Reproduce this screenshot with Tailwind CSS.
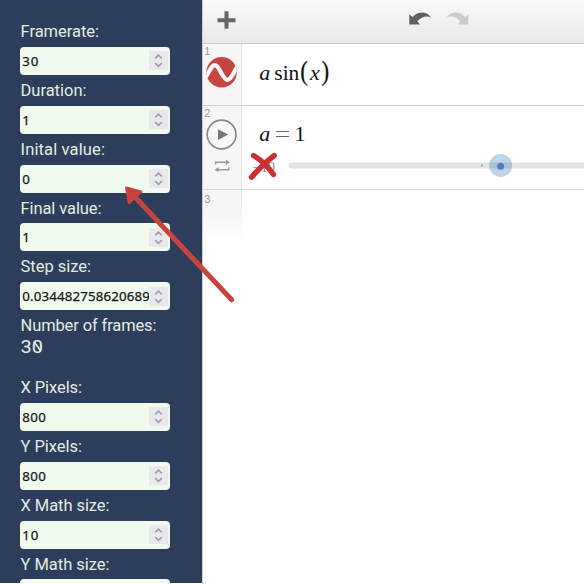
<!DOCTYPE html>
<html lang="en">
<head>
<meta charset="utf-8">
<title>Animation settings</title>
<script src="https://cdn.jsdelivr.net/npm/@tailwindcss/browser@4"></script>
</head>
<body class="relative w-[584px] h-[584px] overflow-hidden bg-white flex font-['Liberation_Sans',sans-serif]">
<svg class="hidden">
  <symbol id="spin" viewBox="0 0 19 19"><rect width="19" height="19" fill="#e9e8ed"/><path d="M6.2 7.3 9.5 4.2l3.3 3.1M6.2 12.2l3.3 3.1 3.3-3.1" fill="none" stroke="#9e9daa" stroke-width="1.6"/></symbol>
</svg>
<aside class="w-[202px] h-[583px] shrink-0 overflow-hidden bg-[#2c3e5c] pl-5 pt-[16.2px]">
  <div id="animation"></div>
  <div class="h-[62px]">
    <svg class="block w-[170px] h-[31px] overflow-visible"><text x="0.5" y="21.2" textLength="136" font-family="Roboto" font-size="16.5" fill="#e3ede1">Number of frames:</text></svg>
    <svg class="block w-[60px] h-[31px] overflow-visible"><text x="0.5" y="11.6" textLength="22.5" lengthAdjust="spacingAndGlyphs" font-family="Roboto" font-size="17.5" fill="#e3ede1">30</text><path d="M14 0.5l6.800 9.500" stroke="#e3ede1" stroke-width="1.700"/></svg>
  </div>
  <div id="resolution"></div>
</aside>
<main class="flex-1 min-w-0 flex flex-col border-l border-[#c9ced6]">
  <header class="h-[44px] shrink-0 border-b border-[#c9c9c9] bg-linear-to-b from-[#fafafa] to-[#e8e8e8] flex items-start">
    <svg class="w-[381px] h-[43px]" viewBox="203 0 381 43">
      <path d="M226.500 11.300v17.500M217.500 20.200h18" stroke="#666" stroke-width="4"/>
      <path d="M409.300 14.200l3.300 2.700C418 11.200 427 10.800 430.900 17.500C426.400 15.100 421.400 16.900 417.300 21.300l2.700 3.300h-10.700z" fill="#5f5f5f"/>
      <path d="M468.300 14.200l-3.300 2.700C459.600 11.200 450.600 10.800 446.700 17.500C451.200 15.100 456.200 16.900 460.300 21.300l-2.700 3.300h10.700z" fill="#cbcbcb"/>
    </svg>
  </header>
  <section class="h-[62px] flex border-b border-[#d2d2d2]">
    <div class="w-[39px] bg-[#f6f6f6] border-r border-[#e4e4e4]">
      <svg class="w-[38px] h-[61px]" viewBox="203 44 38 61">
        <text x="204.200" y="55" font-size="11" fill="#999">1</text>
        <clipPath id="disc"><circle cx="221.600" cy="72.300" r="15.200"/></clipPath>
        <circle cx="221.600" cy="72.300" r="15.200" fill="#c74440"/>
        <path d="M205.500 77.500C211 68 212.500 64.500 215.500 65.300C219.500 66.300 223 80.200 227.500 80C230.500 79.800 234 73 238 65" fill="none" stroke="#fff" stroke-width="4.200" clip-path="url(#disc)"/>
      </svg>
    </div>
    <svg class="w-[342px] h-[61px]" viewBox="242 44 342 61" font-family="Liberation Serif" font-size="22" fill="#111">
      <text x="259.200" y="80" font-style="italic">a</text><text x="274.300" y="80" textLength="25" lengthAdjust="spacingAndGlyphs">sin</text>
      <text transform="translate(300.300 79.600) scale(1.050 1.200)" stroke="#111" stroke-width=".2">(</text><text x="310" y="80" font-style="italic">x</text><text transform="translate(321.500 79.600) scale(1.050 1.200)" stroke="#111" stroke-width=".2">)</text>
    </svg>
  </section>
  <section class="h-[84px] flex border-b border-[#d6d6d6]">
    <div class="w-[39px] bg-[#f6f6f6] border-r border-[#e4e4e4]">
      <svg class="w-[38px] h-[83px]" viewBox="203 106 38 83">
        <text x="204.200" y="117.300" font-size="11" fill="#999">2</text>
        <circle cx="221.600" cy="134.500" r="14.400" fill="#f8f8f8" stroke="#888" stroke-width="1.600"/>
        <path d="M218 129.200l10.200 5.300-10.200 5.500z" fill="#777"/>
        <path d="M215.500 164.500v-2.300h13M228.800 167.500v2.300h-13" fill="none" stroke="#999" stroke-width="1.400"/>
        <path d="M226 159.700l4 2.500-4 2.500zM218.500 167.300l-4 2.500 4 2.500z" fill="#999"/>
      </svg>
    </div>
    <svg class="w-[342px] h-[83px]" viewBox="242 106 342 83">
      <g font-family="Liberation Serif" font-size="22" fill="#111"><text x="259.200" y="140.600" font-style="italic">a</text><path d="M276 131.500h13M276 136.500h13" stroke="#666" stroke-width="1.200"/><text x="294.500" y="140.600">1</text></g>
      <text x="252.500" y="172" textLength="22.500" font-family="Liberation Serif" font-size="14" fill="#888">−10</text>
      <path d="M291.500 165.500H590" stroke="#e4e4e4" stroke-width="6" stroke-linecap="round"/>
      <circle cx="482" cy="165.400" r="1" fill="#999"/>
      <circle cx="500.600" cy="165.400" r="11.500" fill="#2d70b3" fill-opacity=".3"/>
      <circle cx="500.600" cy="166.200" r="3.500" fill="#4a7fc1"/>
      <path d="M253.500 155.500Q265 162 273.500 174.500M274.200 155.500Q263 164 251.500 177.300" fill="none" stroke="#c9302f" stroke-width="5.400" stroke-linecap="round"/>
    </svg>
  </section>
  <section class="h-[54px] w-[39px] bg-linear-to-b from-[#f6f6f6] from-40% to-white">
    <svg class="w-[39px] h-[54px]" viewBox="203 190 39 54"><text x="204.200" y="202.500" font-size="11" fill="#999">3</text><linearGradient id="edge" x2="0" y2="1"><stop stop-color="#e4e4e4"/><stop offset="1" stop-color="#fff"/></linearGradient><rect x="241" y="190" width="1" height="54" fill="url(#edge)"/></svg>
  </section>
</main>
<svg class="absolute inset-0 w-[584px] h-[584px] pointer-events-none" viewBox="0 0 584 584"><path d="M134.500 196.500L231.700 299.800" stroke="#c8443f" stroke-width="5" stroke-linecap="round"/><path d="M126.300 187.800l14.800 4-12.200 11.200z" fill="#c8443f" stroke="#c8443f" stroke-width="2.500" stroke-linejoin="round"/></svg>
<script>
const field = ([label, width, value, valueWidth]) => `
<div class="h-[58.8px]">
  <svg class="block w-[170px] h-[30.8px] overflow-visible"><text x="0.5" y="21.2" textLength="${width}" font-family="Roboto" font-size="16.5" fill="#e3ede1">${label}</text></svg>
  <div class="w-[150px] h-[28px] rounded-[4px] bg-[#f0faee] flex items-center justify-between pr-[2px]">
    <svg class="w-[129px] h-[28px]"><text x="2.3" y="19.1" textLength="${valueWidth}" font-family="Noto Sans" font-size="13.3" fill="#151515" stroke="#151515" stroke-width=".25">${value}</text></svg>
    <svg class="w-[19px] h-[19px]"><use href="#spin"/></svg>
  </div>
</div>`;
animation.innerHTML = [['Framerate:',78.5,'30',16],['Duration:',66,'1',8],['Inital value:',84.5,'0',8],['Final value:',81,'1',8],['Step size:',70.5,'0.034482758620689',127.5]].map(field).join('');
resolution.innerHTML = [['X Pixels:',61.5,'800',23.5],['Y Pixels:',61.5,'800',23.5],['X Math size:',89,'10',16],['Y Math size:',89,'',0]].map(field).join('');
</script>
</body>
</html>
